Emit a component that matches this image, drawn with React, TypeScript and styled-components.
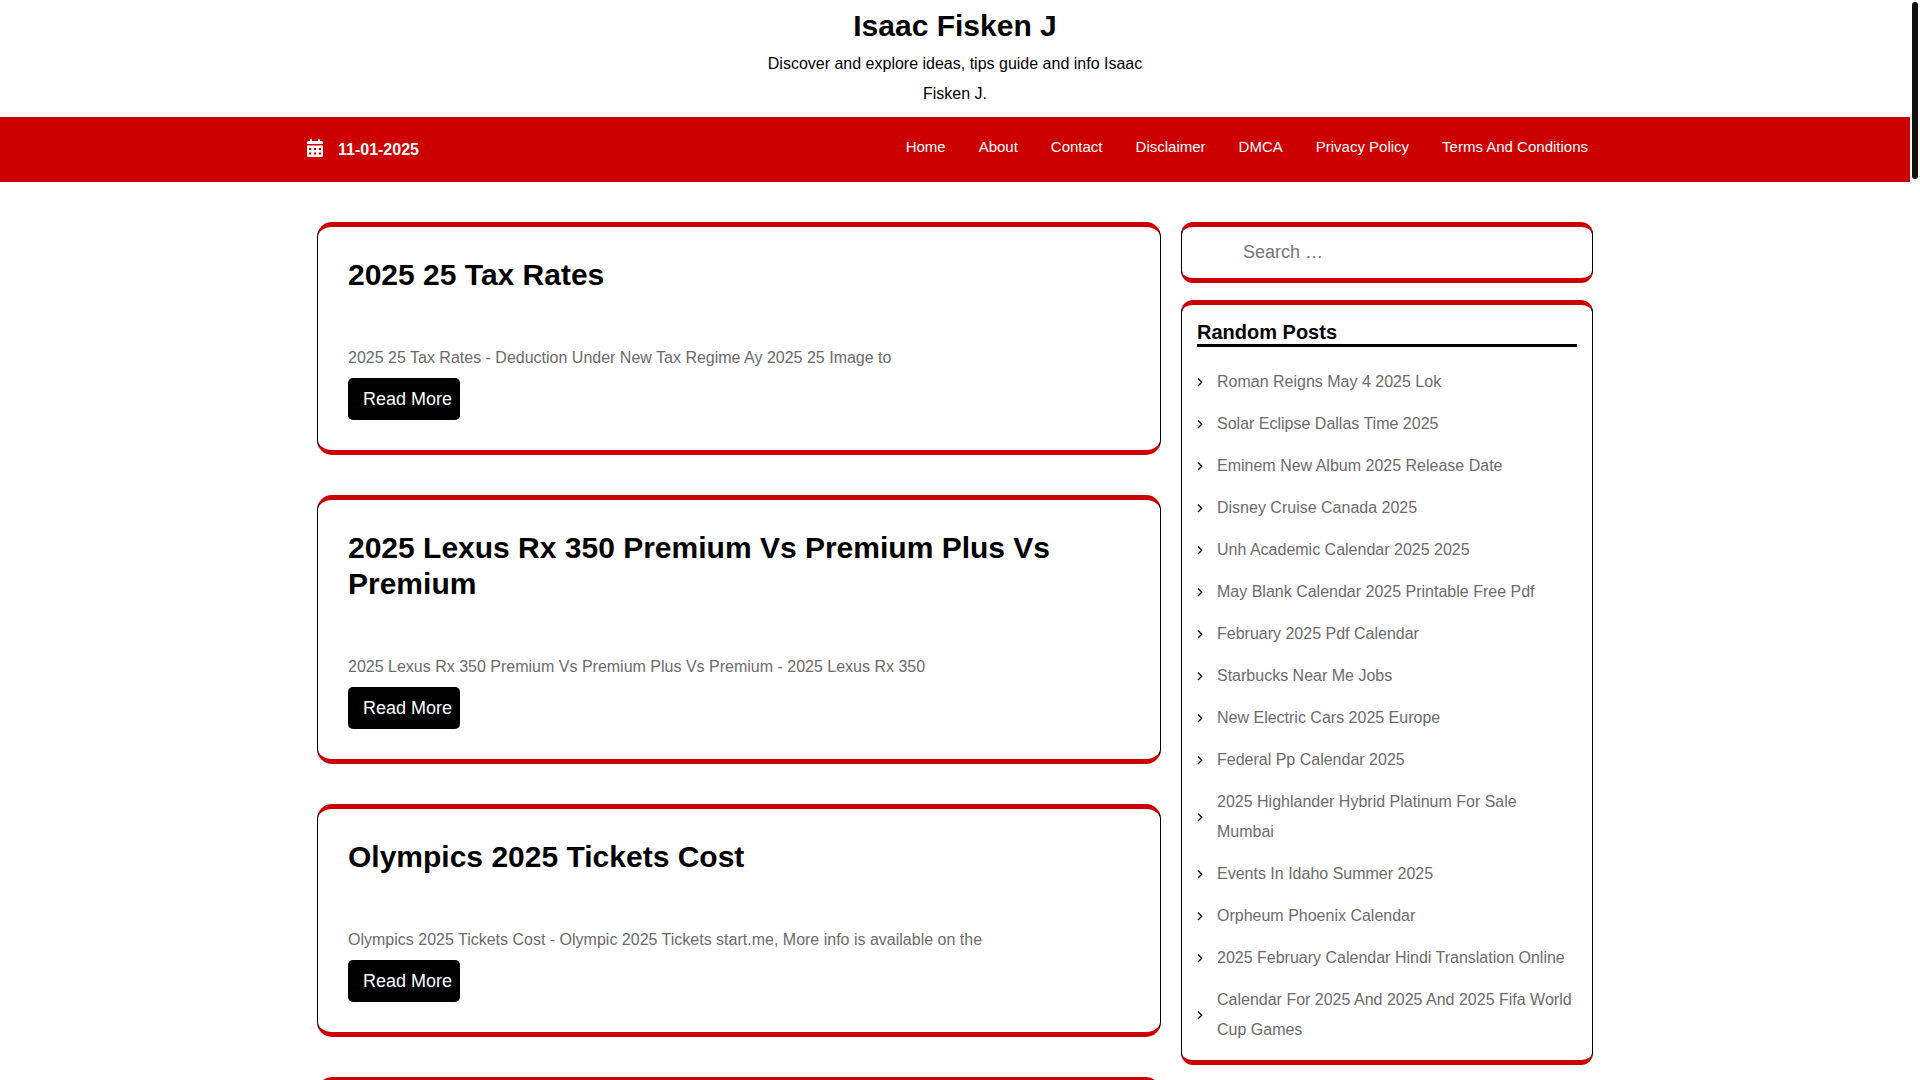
import React from "react";
import styled, { createGlobalStyle } from "styled-components";

const RED = "#cc0000";

const GlobalStyle = createGlobalStyle`
  *, *::before, *::after { box-sizing: border-box; }
  body {
    margin: 0;
    background: #fff;
    color: #000;
    font: 16px/30px "Liberation Sans", Arial, sans-serif;
  }
  h1, h2, h3, p, ul { margin: 0; padding: 0; }
  ul { list-style: none; }
  a { text-decoration: none; }
`;

const Page = styled.div`
  height: 100vh;
  overflow: hidden;
  padding-right: 10px;
`;

const Header = styled.header`
  padding: 8px 0;
  text-align: center;
`;

const SiteTitle = styled.h1`
  font-size: 30px;
  line-height: 36px;
  margin-bottom: 5px;
  a { color: #000; }
`;

const Tagline = styled.p`
  max-width: 408px;
  margin: 0 auto;
`;

const Bar = styled.div`
  background: ${RED};
`;

const Container = styled.div`
  max-width: 1296px;
  margin: 0 auto;
  display: flex;
`;

const BarInner = styled(Container)`
  height: 65px;
  justify-content: space-between;
`;

const DateLabel = styled.p`
  display: flex;
  align-items: center;
  gap: 15px;
  color: #fff;
  font-weight: bold;
  svg { margin-bottom: 3px; }
`;

const Menu = styled.ul`
  display: flex;
  gap: 33px;
  padding: 15px 15px 0 0;
  font-size: 15px;
  a { color: #fff; }
`;

const Columns = styled(Container)`
  padding: 40px 10px;
  gap: 20px;
  align-items: flex-start;
`;

const Main = styled.main`
  flex: 844 1 0;
  display: grid;
  gap: 40px;
`;

const Sidebar = styled.aside`
  flex: 412 1 0;
  display: grid;
  gap: 17px;
`;

const Box = styled.div<{ $radius: number; $pad: number }>`
  border: 1px solid #000;
  border-width: 5px 1px;
  border-color: ${RED} #000;
  border-radius: ${(p) => p.$radius}px;
  padding: ${(p) => p.$pad}px;
`;

const PostTitle = styled.h2`
  font-size: 30px;
  line-height: 36px;
  margin-bottom: 50px;
  a { color: #000; }
`;

const Excerpt = styled.p`
  color: #6b6b6b;
  margin-bottom: 5px;
`;

const ReadMore = styled.a`
  display: block;
  width: fit-content;
  padding: 6px 8px 6px 15px;
  border-radius: 5px;
  background: #000;
  color: #fff;
  font-size: 18px;
`;

const SearchInput = styled.input`
  display: block;
  width: 100%;
  height: 51px;
  padding: 0 61px;
  border: 0;
  outline: 0;
  background: transparent;
  font: 18px/30px "Liberation Sans", Arial, sans-serif;
  &::placeholder { color: #757575; opacity: 1; }
`;

const WidgetTitle = styled.h3`
  font-size: 20px;
  line-height: 24px;
  border-bottom: 3px solid #000;
  margin-bottom: 20px;
`;

const LinkList = styled.ul`
  display: grid;
  gap: 12px;
`;

const LinkItem = styled.li`
  display: flex;
  align-items: center;
  gap: 14px;
  a { color: #6b6b6b; }
  svg { flex: none; }
`;

const ScrollTrack = styled.div`
  position: fixed;
  top: 0;
  right: 0;
  width: 10px;
  height: 100%;
  padding: 2px;
`;

const ScrollThumb = styled.div`
  height: 177px;
  border-radius: 3px;
  background: #111;
`;

const menu = ["Home", "About", "Contact", "Disclaimer", "DMCA", "Privacy Policy", "Terms And Conditions"];

const posts = [
  { title: "2025 25 Tax Rates", text: "2025 25 Tax Rates - Deduction Under New Tax Regime Ay 2025 25 Image to" },
  {
    title: "2025 Lexus Rx 350 Premium Vs Premium Plus Vs Premium",
    text: "2025 Lexus Rx 350 Premium Vs Premium Plus Vs Premium - 2025 Lexus Rx 350",
  },
  {
    title: "Olympics 2025 Tickets Cost",
    text: "Olympics 2025 Tickets Cost - Olympic 2025 Tickets start.me, More info is available on the",
  },
];

const randomPosts = [
  "Roman Reigns May 4 2025 Lok",
  "Solar Eclipse Dallas Time 2025",
  "Eminem New Album 2025 Release Date",
  "Disney Cruise Canada 2025",
  "Unh Academic Calendar 2025 2025",
  "May Blank Calendar 2025 Printable Free Pdf",
  "February 2025 Pdf Calendar",
  "Starbucks Near Me Jobs",
  "New Electric Cars 2025 Europe",
  "Federal Pp Calendar 2025",
  "2025 Highlander Hybrid Platinum For Sale Mumbai",
  "Events In Idaho Summer 2025",
  "Orpheum Phoenix Calendar",
  "2025 February Calendar Hindi Translation Online",
  "Calendar For 2025 And 2025 And 2025 Fifa World Cup Games",
];

const CalendarIcon = () => (
  <svg width="16" height="18" viewBox="0 0 16 18" fill="#fff" aria-hidden="true">
    <path d="M3 1a1 1 0 0 1 2 0v1h6V1a1 1 0 0 1 2 0v1h1.500A1.500 1.500 0 0 1 16 3.500V5H0V3.500A1.500 1.500 0 0 1 1.500 2H3z" />
    <path
      fillRule="evenodd"
      d="M0 6.500h16V16.500a1.500 1.500 0 0 1-1.500 1.500h-13A1.500 1.500 0 0 1 0 16.500zM2 9v2h2.200V9zM6.900 9v2h2.200V9zM11.800 9v2H14V9zM2 13.500v2h2.200v-2zM6.900 13.500v2h2.200v-2zM11.800 13.500v2H14v-2z"
    />
  </svg>
);

const Chevron = () => (
  <svg width="6" height="10" viewBox="0 0 6 10" fill="none" stroke="#111" strokeWidth="1.4" aria-hidden="true">
    <path d="M1 1.5 L4.7 5.2 L1 8.9" />
  </svg>
);

export default function App() {
  return (
    <>
      <GlobalStyle />
      <Page>
        <Header>
          <SiteTitle><a href="#home">Isaac Fisken J</a></SiteTitle>
          <Tagline>Discover and explore ideas, tips guide and info Isaac Fisken J.</Tagline>
        </Header>
        <Bar>
          <BarInner>
            <DateLabel><CalendarIcon />11-01-2025</DateLabel>
            <nav>
              <Menu>
                {menu.map((m) => <li key={m}><a href="#menu">{m}</a></li>)}
              </Menu>
            </nav>
          </BarInner>
        </Bar>
        <Columns>
          <Main>
            {posts.map((p) => (
              <Box as="article" key={p.title} $radius={15} $pad={30}>
                <PostTitle><a href="#post">{p.title}</a></PostTitle>
                <Excerpt>{p.text}</Excerpt>
                <ReadMore href="#post">Read More</ReadMore>
              </Box>
            ))}
            <Box as="article" $radius={15} $pad={30} />
          </Main>
          <Sidebar>
            <Box as="form" $radius={12} $pad={0}>
              <SearchInput type="search" placeholder="Search …" aria-label="Search" />
            </Box>
            <Box as="section" $radius={12} $pad={15}>
              <WidgetTitle>Random Posts</WidgetTitle>
              <LinkList>
                {randomPosts.map((r) => (
                  <LinkItem key={r}><Chevron /><a href="#post">{r}</a></LinkItem>
                ))}
              </LinkList>
            </Box>
          </Sidebar>
        </Columns>
      </Page>
      <ScrollTrack aria-hidden="true"><ScrollThumb /></ScrollTrack>
    </>
  );
}
